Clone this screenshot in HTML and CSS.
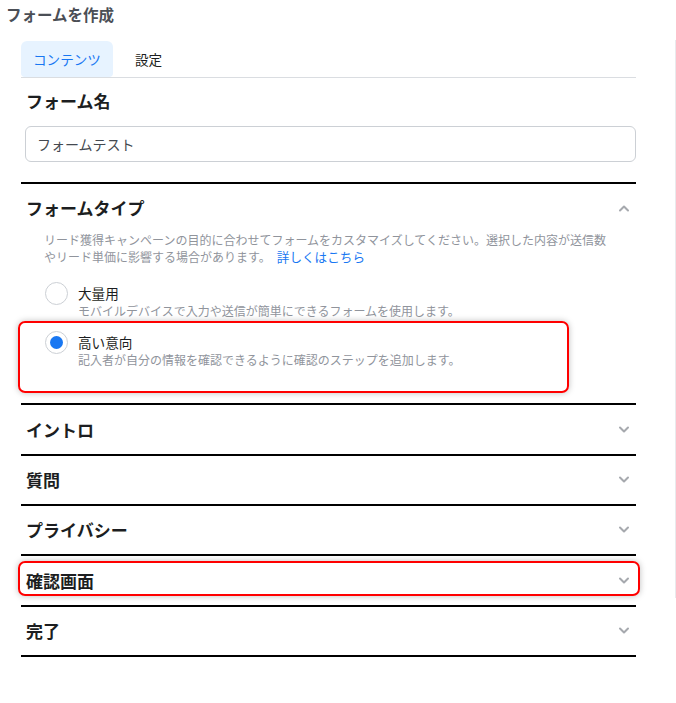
FILE: index.html
```html
<!DOCTYPE html>
<html lang="ja">
<head>
<meta charset="utf-8">
<title>フォームを作成</title>
<link rel="stylesheet" href="styles.css">
</head>
<body>
<div class="layout">
  <main class="main">
    <h1 class="title">フォームを作成</h1>
    <div class="panel">
      <div class="tabs">
        <div class="tab active">コンテンツ</div>
        <div class="tab">設定</div>
      </div>

      <section class="name-section">
        <h2 class="heading">フォーム名</h2>
        <div class="input">フォームテスト</div>
      </section>

      <section class="type-section">
        <div class="row-head">
          <h2 class="heading">フォームタイプ</h2>
          <svg class="chev" viewBox="0 0 12 8" width="12" height="8"><path d="M2 6.5 L6 2.5 L10 6.5" fill="none" stroke="#a6a9ae" stroke-width="2" stroke-linecap="round" stroke-linejoin="round"/></svg>
        </div>
        <div class="desc">
          <div class="desc-line">リード獲得キャンペーンの目的に合わせてフォームをカスタマイズしてください。選択した内容が送信数</div>
          <div class="desc-line desc-last"><span>やリード単価に影響する場合があります。</span><a class="link">詳しくはこちら</a></div>
        </div>
        <div class="options">
          <div class="option">
            <span class="radio"></span>
            <div class="opt-text">
              <div class="opt-label">大量用</div>
              <div class="opt-sub">モバイルデバイスで入力や送信が簡単にできるフォームを使用します。</div>
            </div>
          </div>
          <div class="option">
            <span class="radio checked"></span>
            <div class="opt-text">
              <div class="opt-label">高い意向</div>
              <div class="opt-sub">記入者が自分の情報を確認できるように確認のステップを追加します。</div>
            </div>
          </div>
        </div>
        <div class="mark mark-option"></div>
      </section>

      <section class="acc">
        <div class="acc-row tall"><h2 class="heading">イントロ</h2><svg class="chev" viewBox="0 0 12 8" width="12" height="8"><path d="M2 1.5 L6 5.5 L10 1.5" fill="none" stroke="#a6a9ae" stroke-width="2" stroke-linecap="round" stroke-linejoin="round"/></svg></div>
        <div class="acc-row"><h2 class="heading">質問</h2><svg class="chev" viewBox="0 0 12 8" width="12" height="8"><path d="M2 1.5 L6 5.5 L10 1.5" fill="none" stroke="#a6a9ae" stroke-width="2" stroke-linecap="round" stroke-linejoin="round"/></svg></div>
        <div class="acc-row"><h2 class="heading">プライバシー</h2><svg class="chev" viewBox="0 0 12 8" width="12" height="8"><path d="M2 1.5 L6 5.5 L10 1.5" fill="none" stroke="#a6a9ae" stroke-width="2" stroke-linecap="round" stroke-linejoin="round"/></svg></div>
        <div class="acc-row tall"><h2 class="heading">確認画面</h2><svg class="chev" viewBox="0 0 12 8" width="12" height="8"><path d="M2 1.5 L6 5.5 L10 1.5" fill="none" stroke="#a6a9ae" stroke-width="2" stroke-linecap="round" stroke-linejoin="round"/></svg><div class="mark mark-row"></div></div>
        <div class="acc-row last"><h2 class="heading">完了</h2><svg class="chev" viewBox="0 0 12 8" width="12" height="8"><path d="M2 1.5 L6 5.5 L10 1.5" fill="none" stroke="#a6a9ae" stroke-width="2" stroke-linecap="round" stroke-linejoin="round"/></svg></div>
      </section>
    </div>
  </main>
  <aside class="side"></aside>
</div>
</body>
</html>
```

FILE: styles.css
```css
* { box-sizing: border-box; }
html, body { margin: 0; padding: 0; background: #fff; }
body {
  font-family: "Noto Sans CJK JP", "Noto Sans", sans-serif;
  color: #1c1e21;
}
.layout { display: flex; width: 676px; }
.main { width: 675px; }
.side {
  width: 1px;
  margin-top: 40px;
  height: 558px;
  border-left: 1px solid #e9eaed;
}
.title {
  margin: 0;
  padding: 3px 0 0 6px;
  font-size: 15.5px;
  line-height: 22px;
  font-weight: 700;
  color: #4b4f56;
}
.panel {
  margin-left: 21px;
  width: 615px;
  position: relative;
}
.tabs {
  margin-top: 16px;
  display: flex;
  gap: 10px;
  border-bottom: 1px solid #dadde1;
}
.tab {
  height: 36px;
  padding: 0 12px;
  display: flex;
  align-items: center;
  font-size: 13.6px;
  color: #1c1e21;
  border-radius: 6px 6px 4px 4px;
}
.tab.active { background: #e7f3ff; color: #1877f2; }
.heading {
  margin: 0;
  font-size: 17px;
  line-height: 24px;
  font-weight: 700;
  color: #1c1e21;
}
.name-section { padding: 11px 0 20px 0; }
.name-section .heading { padding-left: 5px; }
.input {
  margin: 13px 0 0 4px;
  width: 611px;
  height: 36px;
  border: 1px solid #ccd0d5;
  border-radius: 6px;
  padding-left: 11px;
  display: flex;
  align-items: center;
  font-size: 14px;
  color: #444950;
}
.type-section {
  position: relative;
  border-top: 2px solid #000;
  padding-bottom: 35px;
}
.row-head {
  height: 48px;
  display: flex;
  align-items: center;
  justify-content: space-between;
  padding: 0 6px 0 5px;
}
.chev { display: block; }
.desc {
  margin: 0 0 0 23px;
  display: flex;
  flex-direction: column;
  gap: 1px;
  font-size: 12px;
  line-height: 16px;
  color: #90949c;
}
.desc-line { white-space: nowrap; }
.desc-last { display: flex; align-items: baseline; gap: 6px; }
.link {
  color: #1877f2;
  font-size: 12.6px;
  line-height: 16px;
}
.options {
  margin: 18px 0 0 24px;
  display: flex;
  flex-direction: column;
  gap: 13px;
}
.option { display: flex; align-items: flex-start; gap: 10px; }
.radio {
  margin-top: -1px;
  width: 23px;
  height: 23px;
  border: 1px solid #ccd0d5;
  border-radius: 50%;
  display: flex;
  align-items: center;
  justify-content: center;
  flex: none;
}
.radio.checked::after {
  content: "";
  width: 13px;
  height: 13px;
  border-radius: 50%;
  background: #1877f2;
}
.opt-label { font-size: 13.6px; line-height: 20px; color: #1c1e21; }
.opt-sub { font-size: 12px; line-height: 16px; color: #90949c; }
.mark {
  position: absolute;
  border: 2px solid #f00;
  border-radius: 7px;
  box-shadow: 0 0 6px rgba(0, 0, 0, 0.25);
  pointer-events: none;
}
.mark-option { left: -3px; top: 137px; width: 551px; height: 72px; }
.acc-row {
  position: relative;
  height: 50px;
  border-top: 2px solid #000;
  display: flex;
  align-items: center;
  justify-content: space-between;
  padding: 0 6px 0 5px;
}
.acc-row.tall { height: 51px; }
.acc-row.last { border-bottom: 2px solid #000; height: 52px; }
.mark-row { left: -3px; top: 5px; width: 622px; height: 35px; }
```
